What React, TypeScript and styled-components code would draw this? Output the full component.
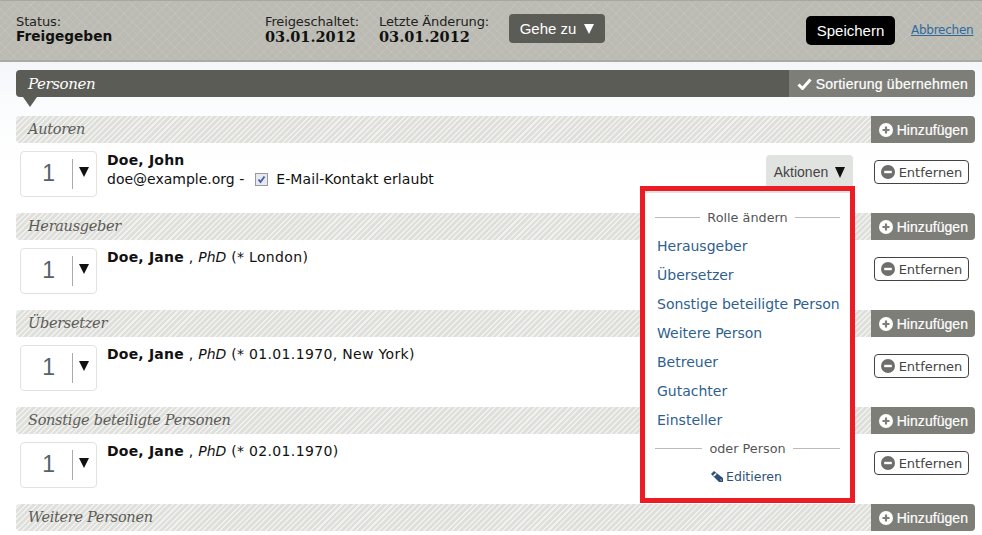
import React from "react";
import styled, { createGlobalStyle } from "styled-components";

const Global = createGlobalStyle`
  html, body { margin: 0; padding: 0; background: #fff; }
  body { font-family: "DejaVu Sans", Verdana, sans-serif; font-size: 14px; color: #222; overflow: hidden; }
  * { box-sizing: border-box; }
`;

const Page = styled.div`
  width: 982px;
  height: 535px;
  overflow: hidden;
  background: linear-gradient(#f4f6fa 61px, #fbfcfd 110px, #fff 170px);
`;

const Header = styled.header`
  height: 62px;
  display: flex;
  align-items: flex-start;
  padding-left: 16px;
  border-top: 1px solid #a6a6a2;
  border-bottom: 2px solid #a9a9a5;
  background-color: #bbbbb3;
  background-image:
    repeating-linear-gradient(45deg, rgba(255,255,255,.07) 0 1px, transparent 1px 6px),
    repeating-linear-gradient(135deg, rgba(255,255,255,.07) 0 1px, transparent 1px 6px);
`;

const Info = styled.div<{ $w: number }>`
  width: ${p => p.$w}px;
  flex: none;
  padding-top: 13px;
  line-height: 15px;
  color: #222;
`;

const Label = styled.div`
  font-size: 13px;
  letter-spacing: -0.12px;
`;

const StatusValue = styled.div`
  font-size: 13.7px;
  font-weight: bold;
  color: #111;
`;

const DateValue = styled.div`
  font-family: "DejaVu Serif", Georgia, serif;
  font-size: 14.5px;
  font-weight: bold;
  color: #111;
`;

const GoTo = styled.div`
  width: 96px;
  height: 29px;
  margin-top: 13px;
  flex: none;
  display: flex;
  align-items: center;
  justify-content: center;
  gap: 8px;
  border-radius: 4px;
  background: #5c5c56;
  color: #fff;
  font: 15px "Liberation Sans", Arial, sans-serif;
`;

const Triangle = styled.span<{ $size: number; $color: string }>`
  display: inline-block;
  flex: none;
  border-left: ${p => p.$size / 2}px solid transparent;
  border-right: ${p => p.$size / 2}px solid transparent;
  border-top: ${p => p.$size}px solid ${p => p.$color};
`;

const Save = styled.div`
  width: 89px;
  height: 29px;
  margin: 15px 0 0 201px;
  flex: none;
  display: flex;
  align-items: center;
  justify-content: center;
  border-radius: 5px;
  background: #000;
  color: #fff;
  font: 15px "Liberation Sans", Arial, sans-serif;
`;

const Cancel = styled.a`
  margin: 22px 0 0 16px;
  color: #2f6a9e;
  text-decoration: underline;
  font-size: 12px;
  letter-spacing: -0.25px;
  line-height: 15px;
`;

const Main = styled.main`
  padding: 8px 7px 0 16px;
`;

const TitleBar = styled.div`
  position: relative;
  height: 27px;
  margin-bottom: 19px;
  display: flex;
  justify-content: space-between;
  border-radius: 4px;
  background: #5c5c56;

  &::after {
    content: "";
    position: absolute;
    left: 7px;
    top: 27px;
    border-left: 7px solid transparent;
    border-right: 7px solid transparent;
    border-top: 10px solid #5c5c56;
  }
`;

const TitleText = styled.h1`
  margin: 0;
  padding-left: 12px;
  font: italic 15px/28px "DejaVu Serif", Georgia, serif;
  letter-spacing: -0.4px;
  color: #fff;
`;

const GreyAction = styled.div<{ $track: number }>`
  height: 27px;
  display: flex;
  align-items: center;
  gap: 4px;
  padding: 0 7px 0 8px;
  border-radius: 0 4px 4px 0;
  background: #7e7e78;
  color: #fff;
  font: 14px "Liberation Sans", Arial, sans-serif;
  letter-spacing: ${p => p.$track}px;
  -webkit-text-stroke: 0.2px #fff;
`;

const Section = styled.section``;

const SectionHead = styled.div`
  height: 27px;
  display: flex;
  justify-content: space-between;
  border-radius: 4px;
  background-image: repeating-linear-gradient(135deg, #dfdfdc 0 2.5px, #f1f1ef 2.5px 4px);
`;

const SectionTitle = styled.h2`
  margin: 0;
  padding-left: 12px;
  font: italic 14.5px/27px "DejaVu Serif", Georgia, serif;
  letter-spacing: -0.3px;
  color: #5c5c56;
`;

const Row = styled.div`
  height: 70px;
  position: relative;
  display: flex;
  align-items: flex-start;
  padding: 8px 6px 0 4px;
`;

const OrderBox = styled.div`
  width: 77px;
  height: 46px;
  flex: none;
  display: flex;
  align-items: center;
  border: 1px solid #e2e2e0;
  border-radius: 4px;
  background: #fff;
`;

const OrderNum = styled.div`
  width: 52px;
  text-align: right;
  padding-right: 17px;
  border-right: 1px solid #aaa;
  height: 30px;
  font: 23px/29px "Liberation Sans", Arial, sans-serif;
  color: #55626c;
`;

const OrderArrow = styled.div`
  flex: 1;
  display: flex;
  justify-content: center;
  padding: 0 2px 5px 0;
`;

const Person = styled.div`
  flex: 1;
  padding: 0 0 0 10px;
  line-height: 19px;
  letter-spacing: 0.34px;
  color: #111;
`;

const Name = styled.b`
  letter-spacing: 0.2px;
  color: #111;
`;

const Role = styled.i`
  letter-spacing: 0;
`;

const Contact = styled.div`
  display: flex;
  align-items: center;
  letter-spacing: 0;
`;

const ConsentLabel = styled.span`
  letter-spacing: 0.1px;
`;

const CheckSvg = styled.svg`
  margin: 0 8px 0 11px;
  flex: none;
`;

const ActionsWrap = styled.div`
  position: relative;
  width: 87px;
  height: 32px;
  margin: 4px 21px 0 0;
  padding-top: 2px;
  flex: none;
  display: flex;
  align-items: center;
  justify-content: center;
  gap: 7px;
  border-radius: 4px 4px 0 0;
  background: #e1e3e0;
  color: #444;
  font: 14px "Liberation Sans", Arial, sans-serif;
`;

const Menu = styled.div`
  position: absolute;
  left: -126px;
  top: 31px;
  width: 215px;
  height: 317px;
  padding: 18px 10px 0;
  border: 5px solid #ed1c24;
  background: linear-gradient(#e1e3e0 2px, #fff 2px);
  font: 14px "DejaVu Sans", Verdana, sans-serif;
  z-index: 5;
`;

const MenuDivider = styled.div`
  display: flex;
  align-items: center;
  justify-content: center;
  gap: 7px;
  height: 16px;
  font-size: 12.8px;
  color: #555;

  &::before, &::after {
    content: "";
    flex: 1;
    height: 1px;
    background: #bbb;
  }
`;

const MenuList = styled.div`
  display: flex;
  flex-direction: column;
  padding: 7px 0 5px 2px;
`;

const MenuItem = styled.a`
  height: 29px;
  line-height: 29px;
  color: #2f5f8f;
  white-space: nowrap;
`;

const EditLink = styled.a`
  display: flex;
  align-items: center;
  justify-content: center;
  gap: 3px;
  margin-top: 12px;
  padding-right: 2px;
  height: 16px;
  font-size: 12.5px;
  color: #2c5078;
`;

const RemoveBtn = styled.div`
  width: 95px;
  height: 24px;
  margin-top: 9px;
  flex: none;
  display: flex;
  align-items: center;
  justify-content: center;
  gap: 4px;
  border: 1px solid #444;
  border-radius: 4px;
  background: #fff;
  color: #444;
  font-size: 13px;
`;

const PlusIcon = () => (
  <svg width="14" height="14" viewBox="0 0 14 14"><circle cx="7" cy="7" r="7" fill="#fff" /><path d="M3.5 7h7M7 3.5v7" stroke="#7e7e78" strokeWidth="2.2" /></svg>
);
const MinusIcon = () => (
  <svg width="14" height="14" viewBox="0 0 14 14"><circle cx="7" cy="7" r="7" fill="#6e6e6a" /><path d="M3.2 7h7.6" stroke="#fff" strokeWidth="2.4" /></svg>
);
const CheckIcon = () => (
  <svg width="15" height="12" viewBox="0 0 15 12"><path d="M1.5 6.5l4 4L13.5 1.5" fill="none" stroke="#fff" strokeWidth="3" /></svg>
);
const PencilIcon = () => (
  <svg width="12" height="11" viewBox="0 0 12 11"><path d="M0 3L3 0l9 7v4H8z" fill="#2c5078" /><path d="M2 4.6L4.6 2l1.2 1L3.2 5.6z" fill="#fff" /><path d="M9 9l1-1 1 2z" fill="#b9c7d6" /></svg>
);
const Tick = () => (
  <CheckSvg width="13" height="13" viewBox="0 0 13 13">
    <rect x=".5" y=".5" width="12" height="12" fill="#e8e9f0" stroke="#9a9a9a" />
    <path d="M3.5 6.5l2 2.5 4-5.5" fill="none" stroke="#3f5fa8" strokeWidth="1.8" />
  </CheckSvg>
);

const Add = () => (
  <GreyAction $track={0.05}><PlusIcon />Hinzufügen</GreyAction>
);

const Remove = () => (
  <RemoveBtn><MinusIcon />Entfernen</RemoveBtn>
);

const Order = () => (
  <OrderBox>
    <OrderNum>1</OrderNum>
    <OrderArrow><Triangle $size={10} $color="#111" /></OrderArrow>
  </OrderBox>
);

const roles = ["Herausgeber", "Übersetzer", "Sonstige beteiligte Person", "Weitere Person", "Betreuer", "Gutachter", "Einsteller"];

const others = [
  { title: "Herausgeber", extra: "(* London)" },
  { title: "Übersetzer", extra: "(* 01.01.1970, New York)" },
  { title: "Sonstige beteiligte Personen", extra: "(* 02.01.1970)" },
];

export default function App() {
  return (
    <Page>
      <Global />
      <Header>
        <Info $w={249}><Label>Status:</Label><StatusValue>Freigegeben</StatusValue></Info>
        <Info $w={114}><Label>Freigeschaltet:</Label><DateValue>03.01.2012</DateValue></Info>
        <Info $w={130}><Label>Letzte Änderung:</Label><DateValue>03.01.2012</DateValue></Info>
        <GoTo>Gehe zu <Triangle $size={10} $color="#fff" /></GoTo>
        <Save>Speichern</Save>
        <Cancel>Abbrechen</Cancel>
      </Header>
      <Main>
        <TitleBar>
          <TitleText>Personen</TitleText>
          <GreyAction $track={0.25}><CheckIcon />Sortierung übernehmen</GreyAction>
        </TitleBar>

        <Section>
          <SectionHead><SectionTitle>Autoren</SectionTitle><Add /></SectionHead>
          <Row>
            <Order />
            <Person>
              <Name>Doe, John</Name>
              <Contact>doe@example.org -<Tick /><ConsentLabel>E-Mail-Kontakt erlaubt</ConsentLabel></Contact>
            </Person>
            <ActionsWrap>
              Aktionen <Triangle $size={11} $color="#111" />
              <Menu>
                <MenuDivider>Rolle ändern</MenuDivider>
                <MenuList>
                  {roles.map(r => <MenuItem key={r}>{r}</MenuItem>)}
                </MenuList>
                <MenuDivider>oder Person</MenuDivider>
                <EditLink><PencilIcon />Editieren</EditLink>
              </Menu>
            </ActionsWrap>
            <Remove />
          </Row>
        </Section>

        {others.map(o => (
          <Section key={o.title}>
            <SectionHead><SectionTitle>{o.title}</SectionTitle><Add /></SectionHead>
            <Row>
              <Order />
              <Person>
                <Name>Doe, Jane</Name> , <Role>PhD</Role> {o.extra}
              </Person>
              <Remove />
            </Row>
          </Section>
        ))}

        <Section>
          <SectionHead><SectionTitle>Weitere Personen</SectionTitle><Add /></SectionHead>
        </Section>
      </Main>
    </Page>
  );
}
